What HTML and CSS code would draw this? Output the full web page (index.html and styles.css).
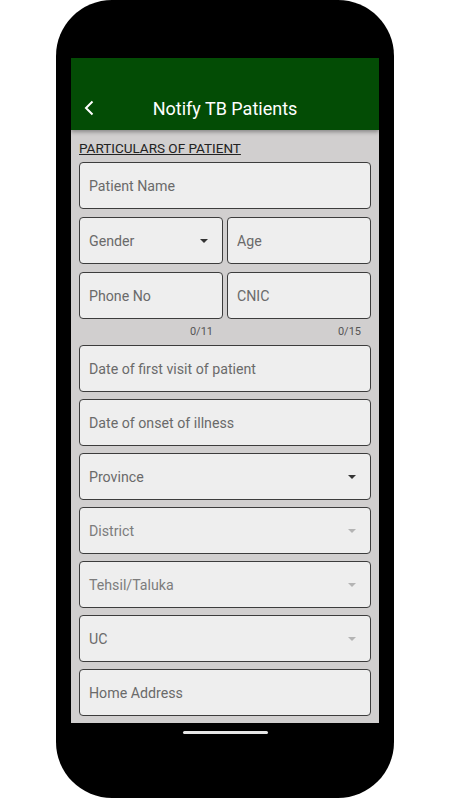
FILE: index.html
```html
<!DOCTYPE html>
<html lang="en">
<head>
    <meta charset="UTF-8">
    <meta name="viewport" content="width=device-width, initial-scale=1.0">
    <title>Notify TB Patients</title>
    <link rel="stylesheet" href="styles.css">
</head>
<body>
    <div class="phone">
        <div class="screen">
            <div class="appbar">
                <svg class="back" width="10" height="16" viewBox="0 0 10 16">
                    <path d="M8.5 1.5 L2 8 L8.5 14.5" fill="none" stroke="#fff" stroke-width="2"/>
                </svg>
                <h1>Notify TB Patients</h1>
            </div>
            <div class="form">
                <h2>PARTICULARS OF PATIENT</h2>
                <input class="field" type="text" placeholder="Patient Name">
                <div class="row">
                    <div class="field select">Gender <span class="arrow"></span></div>
                    <input class="field" type="text" placeholder="Age">
                </div>
                <div class="row">
                    <input class="field" type="text" placeholder="Phone No">
                    <input class="field" type="text" placeholder="CNIC">
                </div>
                <div class="row counters">
                    <span>0/11</span>
                    <span>0/15</span>
                </div>
                <input class="field" type="text" placeholder="Date of first visit of patient">
                <input class="field" type="text" placeholder="Date of onset of illness">
                <div class="field select">Province <span class="arrow"></span></div>
                <div class="field select disabled">District <span class="arrow"></span></div>
                <div class="field select disabled">Tehsil/Taluka <span class="arrow"></span></div>
                <div class="field select disabled uc">UC <span class="arrow"></span></div>
                <input class="field" type="text" placeholder="Home Address">
            </div>
        </div>
        <div class="home-bar"></div>
    </div>
</body>
</html>
```

FILE: styles.css
```css
body {
    margin: 0;
    background: #fff;
    font-family: Roboto, "Liberation Sans", sans-serif;
}
.phone {
    width: 338px;
    height: 798px;
    margin-left: 56px;
    padding: 58px 15px 0;
    box-sizing: border-box;
    background: #000;
    border-radius: 56px;
}
.screen {
    height: 665px;
    background: #d1cfcf;
    overflow: hidden;
}
.appbar {
    height: 72px;
    padding-top: 28px;
    box-sizing: border-box;
    background: #034c05;
    display: flex;
    align-items: center;
    position: relative;
    box-shadow: 0 2px 4px rgba(0, 0, 0, 0.35);
}
.back {
    margin-left: 13px;
}
.appbar h1 {
    flex: 1;
    margin: 0 23px 0 0;
    text-align: center;
    color: #fff;
    font-size: 18px;
    font-weight: 400;
}
.form {
    padding: 7px 8px 0;
    display: flex;
    flex-direction: column;
    gap: 7px;
}
.form h2 {
    margin: 1px 0 -3px;
    font-size: 13.5px;
    font-weight: 400;
    line-height: 20px;
    color: #222;
    text-decoration: underline;
}
.field {
    height: 47px;
    box-sizing: border-box;
    border: 1px solid #3c3c3c;
    border-radius: 4px;
    background: #eeeeee;
    padding: 0 9px;
    font-family: Roboto, "Liberation Sans", sans-serif;
    font-size: 14.2px;
    color: #6a6a6a;
    width: 100%;
    outline: none;
}
.field::placeholder {
    color: #6a6a6a;
}
.select {
    display: flex;
    align-items: center;
    justify-content: space-between;
}
.arrow {
    width: 0;
    height: 0;
    margin-right: 5px;
    border-left: 4px solid transparent;
    border-right: 4px solid transparent;
    border-top: 4px solid #333;
}
.disabled {
    color: #7c7c7c;
}
.disabled .arrow {
    border-top-color: #b4b4b4;
}
.uc {
    color: #6a6a6a;
}
.row {
    display: grid;
    grid-template-columns: 1fr 1fr;
    gap: 4px;
    margin-top: 1px;
}
.counters {
    height: 12px;
    margin-top: 0;
    font-size: 11px;
    line-height: 12px;
    color: #555;
    text-align: right;
}
.counters span {
    padding-right: 10px;
}
.home-bar {
    width: 85px;
    height: 3px;
    margin: 8px auto 0;
    border-radius: 2px;
    background: #e6e6e6;
}
```
